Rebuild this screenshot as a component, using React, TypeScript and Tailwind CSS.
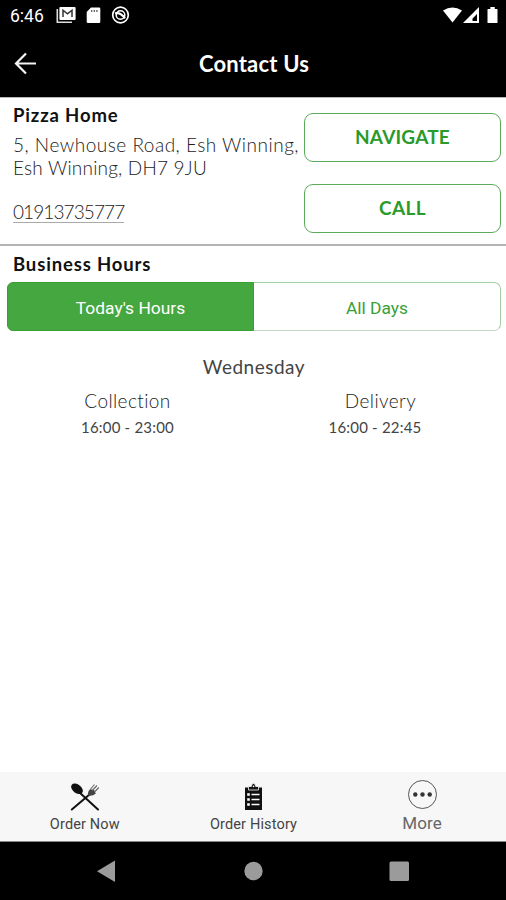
import React from "react";

function StatusBar() {
  return (
    <div className="flex h-8 items-start justify-between text-white">
      <div className="flex items-start">
        <span className="ml-[10px] mt-[6px] w-[46px] font-['Roboto',sans-serif] text-[17.5px] leading-5">6:46</span>
        <svg className="mt-[6px]" width="20" height="18" viewBox="0 0 20 18">
          <path d="M1.3 3v13.3H16" fill="none" stroke="#ddd" strokeWidth="1.6" />
          <rect x="3.4" y="1" width="16.2" height="13" rx="1" fill="#fff" />
          <path d="M7 11V4.2l4.5 3.6L16 4.2V11" fill="none" stroke="#333" strokeWidth="1.5" />
        </svg>
        <svg className="ml-[10px] mt-[7px]" width="15" height="17" viewBox="0 0 15 17">
          <path d="M5 .5h8q1.3 0 1.3 1.3v13q0 1.3-1.3 1.3H2q-1.3 0-1.3-1.3V5z" fill="#fff" />
          <path d="M5.7 3v2M8.3 3v2M10.9 3v2" stroke="#555" strokeWidth="1.2" />
        </svg>
        <svg className="ml-[10px] mt-[5px]" width="20" height="20" viewBox="0 0 20 20" fill="none" stroke="#fff">
          <circle cx="9.5" cy="10" r="7.8" strokeWidth="1.7" />
          <circle cx="9.5" cy="10" r="4.3" strokeWidth="1.5" />
          <path d="M4 8.3q5.5-1.5 10 5" strokeWidth="2.2" />
        </svg>
      </div>
      <svg className="mt-[6px]" width="64" height="19" viewBox="0 0 64 19" fill="#fff">
        <path d="M1 4.5Q10.5-1.7 20 4.5L10.5 16.5z" />
        <path fillRule="evenodd" d="M37 1v16H21zM35 8L30.5 12.5V15H35z" />
        <path d="M46 3h2.3V1h4.4v2H55q.5 0 .5.5v13q0 .5-.5.5h-9q-.5 0-.5-.5v-13q0-.5.5-.5z" />
      </svg>
    </div>
  );
}

function Header() {
  return (
    <div className="relative flex h-[65px] items-center justify-center text-white">
      <svg className="absolute left-[14px] top-[20px]" width="24" height="24" viewBox="0 0 24 24" fill="none" stroke="#f4f4f4" strokeWidth="2.2">
        <path d="M22 11.5H2M12 1.5l-10 10 10 10" />
      </svg>
      <h1 className="pb-px pl-[2px] text-[22px] font-bold leading-7 tracking-[0.2px]">Contact Us</h1>
    </div>
  );
}

function Contact() {
  return (
    <section className="flex h-[149px] border-b-2 border-t border-b-[#b4b4b4] border-t-[#b8b8b8]">
      <div className="w-[304px] whitespace-nowrap pl-[13px]">
        <h2 className="mt-[5px] text-[18.5px] font-bold leading-6 tracking-[0.85px] text-[#111]">Pizza Home</h2>
        <p className="mt-[6px] text-[19px] font-light leading-[23px] tracking-[0.5px] text-[#222]">
          5, Newhouse Road, Esh Winning,
          <br />
          <span className="tracking-[0.2px]">Esh Winning, DH7 9JU</span>
        </p>
        <a className="mt-[24px] inline-block h-[20px] border-b border-[#aaa] text-[19px] font-light leading-[18px] tracking-[-0.9px] text-[#222]">01913735777</a>
      </div>
      <div className="flex w-[197px] flex-col gap-[22px] pt-[15px] text-[19px] font-bold text-[#2a9a2a]">
        <button className="h-[49px] rounded-[9px] border-[1.5px] border-[#5cab5c] pb-px tracking-[0.2px]">NAVIGATE</button>
        <button className="h-[49px] rounded-[9px] border-[1.5px] border-[#5cab5c] pb-px tracking-[0.4px]">CALL</button>
      </div>
    </section>
  );
}

function Hours() {
  return (
    <section className="flex-1">
      <h2 className="ml-[13px] mt-[6px] text-[18.5px] font-bold leading-6 tracking-[0.85px] text-[#111]">Business Hours</h2>
      <div className="ml-[7px] mt-[6px] flex h-[49px] w-[494px] font-['Roboto',sans-serif] text-[17.4px]">
        <button className="w-[247px] rounded-l-[6px] border border-[#38a033] bg-[#45a740] pt-[3px] text-white">Today's Hours</button>
        <button className="w-[247px] rounded-r-[7px] border border-l-0 border-[#a4cfa4] border-b-[#c8d8c8] pt-[3px] text-[#37a137]">All Days</button>
      </div>
      <p className="mt-[24px] pl-[2px] text-center text-[19px] leading-6 tracking-[0.5px] text-[#444]">Wednesday</p>
      <div className="mt-[10px] grid grid-cols-[255px_240px] text-center text-[#444]">
        <div>
          <p className="text-[19px] font-light leading-6 tracking-[0.4px] text-[#222]">Collection</p>
          <p className="mt-[4px] text-[15px] leading-5 tracking-[0.2px]">16:00 - 23:00</p>
        </div>
        <div>
          <p className="pl-[11px] text-[19px] font-light leading-6 tracking-[0.4px] text-[#222]">Delivery</p>
          <p className="mt-[4px] text-[15px] leading-5 tracking-[0.2px]">16:00 - 22:45</p>
        </div>
      </div>
    </section>
  );
}

function TabBar() {
  return (
    <nav className="grid h-[70px] grid-cols-3 border-b border-[#888] bg-[#f7f7f7] text-center font-['Roboto',sans-serif] text-[14.5px] tracking-[0.15px] text-[#444]">
      <div className="flex flex-col items-center pl-px pt-[11px]">
        <svg width="30" height="29" viewBox="0 0 30 29" stroke="#111" fill="#111">
          <path d="M9.5 9.5L28 26.5M19.5 11.5L1.8 26.5" strokeWidth="2" strokeLinecap="round" />
          <ellipse cx="7" cy="5.8" rx="6.6" ry="4.3" transform="rotate(38 7 5.8)" stroke="none" />
          <path d="M18 12.5q-.5-4 2-6.3l4 .8 1.8 3.5q-3 2.8-7.8 2z" fill="#444" stroke="none" />
          <path d="M20.3 6.5L24.5 1.5M22.3 7.5L27 2.5M24.5 9L28.8 4.5" fill="none" stroke="#666" strokeWidth="1.1" />
        </svg>
        <span className="mt-[3px] leading-5">Order Now</span>
      </div>
      <div className="flex flex-col items-center pl-px pt-[11px]">
        <svg width="19" height="29" viewBox="0 0 19 29">
          <path d="M1 4.5h17V27H1z" fill="#111" />
          <path d="M4.5 3.5h2.8q.3-3 2.2-3t2.2 3h2.8V7h-10z" fill="#111" stroke="#f7f7f7" strokeWidth=".8" />
          <circle cx="9.5" cy="3.4" r=".8" fill="#fff" />
          <path d="M3.2 11.5h2.6M3.2 16.5h2.6M3.2 21.5h2.6" stroke="#fff" strokeWidth="2.3" />
          <path d="M7.5 11.5h8M7.5 16.5h8M7.5 21.5h8" stroke="#fff" strokeWidth="1.7" />
        </svg>
        <span className="mt-[3px] leading-5">Order History</span>
      </div>
      <div className="flex flex-col items-center pl-[1px] pt-[7px]">
        <svg width="31" height="31" viewBox="0 0 31 31">
          <circle cx="15.5" cy="15.5" r="14" fill="none" stroke="#555" strokeWidth="1" />
          <g fill="#333">
            <circle cx="8.3" cy="15.5" r="2.2" />
            <circle cx="15.5" cy="15.5" r="2.2" />
            <circle cx="22.7" cy="15.5" r="2.2" />
          </g>
        </svg>
        <span className="mt-[3px] text-[17px] leading-5 text-[#666]">More</span>
      </div>
    </nav>
  );
}

export default function App() {
  return (
    <main className="flex h-[900px] w-[506px] flex-col overflow-hidden bg-white font-['Lato',sans-serif]">
      <div className="bg-black">
        <StatusBar />
        <Header />
      </div>
      <Contact />
      <Hours />
      <TabBar />
      <div className="flex h-[58px] items-center bg-black">
        <svg width="506" height="58" viewBox="0 0 506 58" fill="#9b9b9b">
          <path d="M115 18.5v21.5L97 29.2z" />
          <circle cx="253.5" cy="29" r="9.2" />
          <rect x="389.5" y="19.5" width="19.5" height="19.5" rx="1.5" />
        </svg>
      </div>
    </main>
  );
}
